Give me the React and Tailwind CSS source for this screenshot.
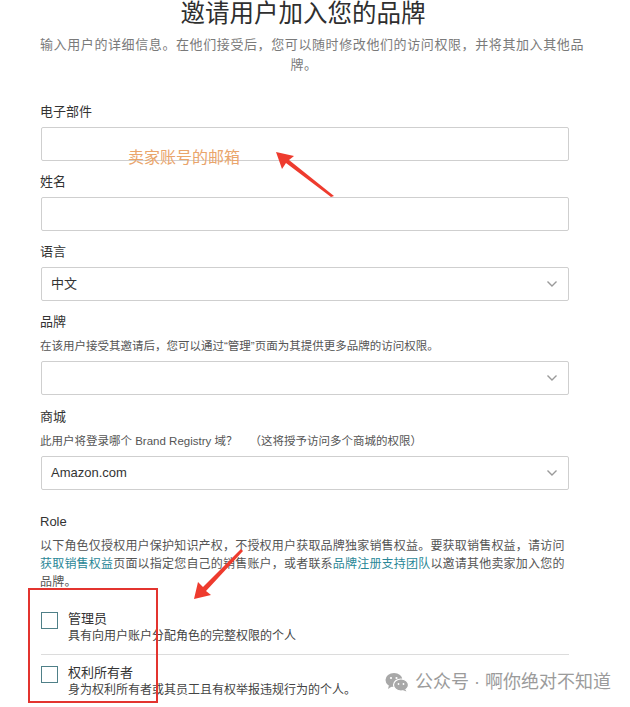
import React from 'react';

const font = { fontFamily: '"Liberation Sans", "Noto Sans CJK SC", sans-serif' };

const Chevron = () => (
    <svg width="12" height="8" viewBox="0 0 12 8" className="shrink-0">
        <path d="M1.5 1.5 L6 6 L10.5 1.5" fill="none" stroke="#9a9a9a" strokeWidth="1.4" />
    </svg>
);

const Label = ({ children }) => (
    <div className="text-[13px] leading-[20px] text-[#333]">{children}</div>
);

const Helper = ({ children }) => (
    <div className="mt-[5px] text-[11.5px] leading-[18px] text-[#555]">{children}</div>
);

const Input = ({ mt = 'mt-[5px]' }) => (
    <div className={`${mt} ml-px h-[34px] w-[528px] rounded-[2px] border border-[#cfcfcf] bg-white`} />
);

const Select = ({ value, mt = 'mt-[5px]' }) => (
    <div className={`${mt} ml-px flex h-[34px] w-[528px] items-center justify-between rounded-[2px] border border-[#cfcfcf] bg-white pl-[9px] pr-[10px]`}>
        <span className="text-[13px] text-[#333]">{value}</span>
        <Chevron />
    </div>
);

const RoleOption = ({ title, desc }) => (
    <div className="flex gap-[10px]">
        <div className="mt-[2px] h-[17px] w-[17px] shrink-0 border-[1.5px] border-[#4f8088] bg-white" />
        <div>
            <div className="text-[13px] leading-[17px] text-[#333]">{title}</div>
            <div className="text-[12px] leading-[18px] text-[#444]">{desc}</div>
        </div>
    </div>
);

const App = () => {
    return (
        <div className="relative h-[707px] w-[630px] overflow-hidden bg-white" style={font}>
            <main className="pl-[40px] pr-[62px]">
                {/* Header */}
                <h1 className="mt-0 pr-[2px] text-center text-[24.5px] font-normal leading-[28px] text-[#2f2f2f]">
                    邀请用户加入您的品牌
                </h1>
                <p className="mt-[7px] whitespace-nowrap text-center text-[13px] leading-[20px] tracking-[0.6px] text-[#7a7a7a]">
                    输入用户的详细信息。在他们接受后，您可以随时修改他们的访问权限，并将其加入其他品<br />牌。
                </p>

                {/* Email */}
                <div className="mt-[27px]">
                    <Label>电子部件</Label>
                    <Input />
                </div>

                {/* Name */}
                <div className="mt-[11px]">
                    <Label>姓名</Label>
                    <Input />
                </div>

                {/* Language */}
                <div className="mt-[11px]">
                    <Label>语言</Label>
                    <Select value="中文" />
                </div>

                {/* Brand */}
                <div className="mt-[11px]">
                    <Label>品牌</Label>
                    <Helper>在该用户接受其邀请后，您可以通过“管理”页面为其提供更多品牌的访问权限。</Helper>
                    <Select value="" mt="mt-[6px]" />
                </div>

                {/* Marketplace */}
                <div className="mt-[12px]">
                    <Label>商城</Label>
                    <Helper>
                        此用户将登录哪个 Brand Registry 域？<span className="ml-[12px]">（这将授予访问多个商城的权限）</span>
                    </Helper>
                    <Select value="Amazon.com" mt="mt-[6px]" />
                </div>

                {/* Role */}
                <div className="mt-[22px]">
                    <Label>Role</Label>
                    <p className="mt-[5px] whitespace-nowrap text-[12px] leading-[18px] tracking-[0.2px] text-[#555]">
                        以下角色仅授权用户保护知识产权，不授权用户获取品牌独家销售权益。要获取销售权益，请访问<br />
                        <span className="text-[#2a8797]">获取销售权益</span>页面以指定您自己的销售账户，或者联系<span className="text-[#2a8797]">品牌注册支持团队</span>以邀请其他卖家加入您的<br />
                        品牌。
                    </p>
                    <div className="mt-[19px] ml-px w-[528px]">
                        <RoleOption title="管理员" desc="具有向用户账户分配角色的完整权限的个人" />
                        <div className="mt-[9px] h-px bg-[#dcdcdc]" />
                        <div className="mt-[9px]">
                            <RoleOption title="权利所有者" desc="身为权利所有者或其员工且有权举报违规行为的个人。" />
                        </div>
                    </div>
                </div>
            </main>

            {/* Annotations */}
            <div className="absolute left-[128px] top-[147px] text-[16px] leading-[22px] text-[#eaa56b]">卖家账号的邮箱</div>
            <div className="absolute left-[28px] top-[588px] h-[115px] w-[130px] border-2 border-[#e3342f]" />
            <svg className="absolute left-0 top-0" width="630" height="707" viewBox="0 0 630 707">
                <polygon points="334,196 331,197 286,163 282,169 276,152 294,156 289,160" fill="#ee3b2e" />
                <polygon points="241,549 243,551 206,591 211,595 194,599 198,582 203,587" fill="#ee3b2e" />
            </svg>

            {/* Watermark */}
            <div className="absolute left-[385px] top-[670px] flex items-center gap-[6px] text-[18px] leading-[24px] text-[#9b9b9b]">
                <svg width="24" height="20" viewBox="0 0 24 20">
                    <ellipse cx="9" cy="8" rx="8.5" ry="7" fill="#a8a8a8" />
                    <path d="M4 13 L3 17 L7.5 14 Z" fill="#a8a8a8" />
                    <ellipse cx="16" cy="13" rx="7.5" ry="6" fill="#a8a8a8" stroke="#fff" strokeWidth="1.2" />
                    <path d="M20 17 L21.5 19.5 L17.5 18 Z" fill="#a8a8a8" />
                    <circle cx="6" cy="6" r="1.1" fill="#fff" />
                    <circle cx="11.5" cy="6" r="1.1" fill="#fff" />
                    <circle cx="13.5" cy="12" r="0.9" fill="#fff" />
                    <circle cx="18.5" cy="12" r="0.9" fill="#fff" />
                </svg>
                <span>公众号 · 啊你绝对不知道</span>
            </div>
        </div>
    );
};

export default App;
